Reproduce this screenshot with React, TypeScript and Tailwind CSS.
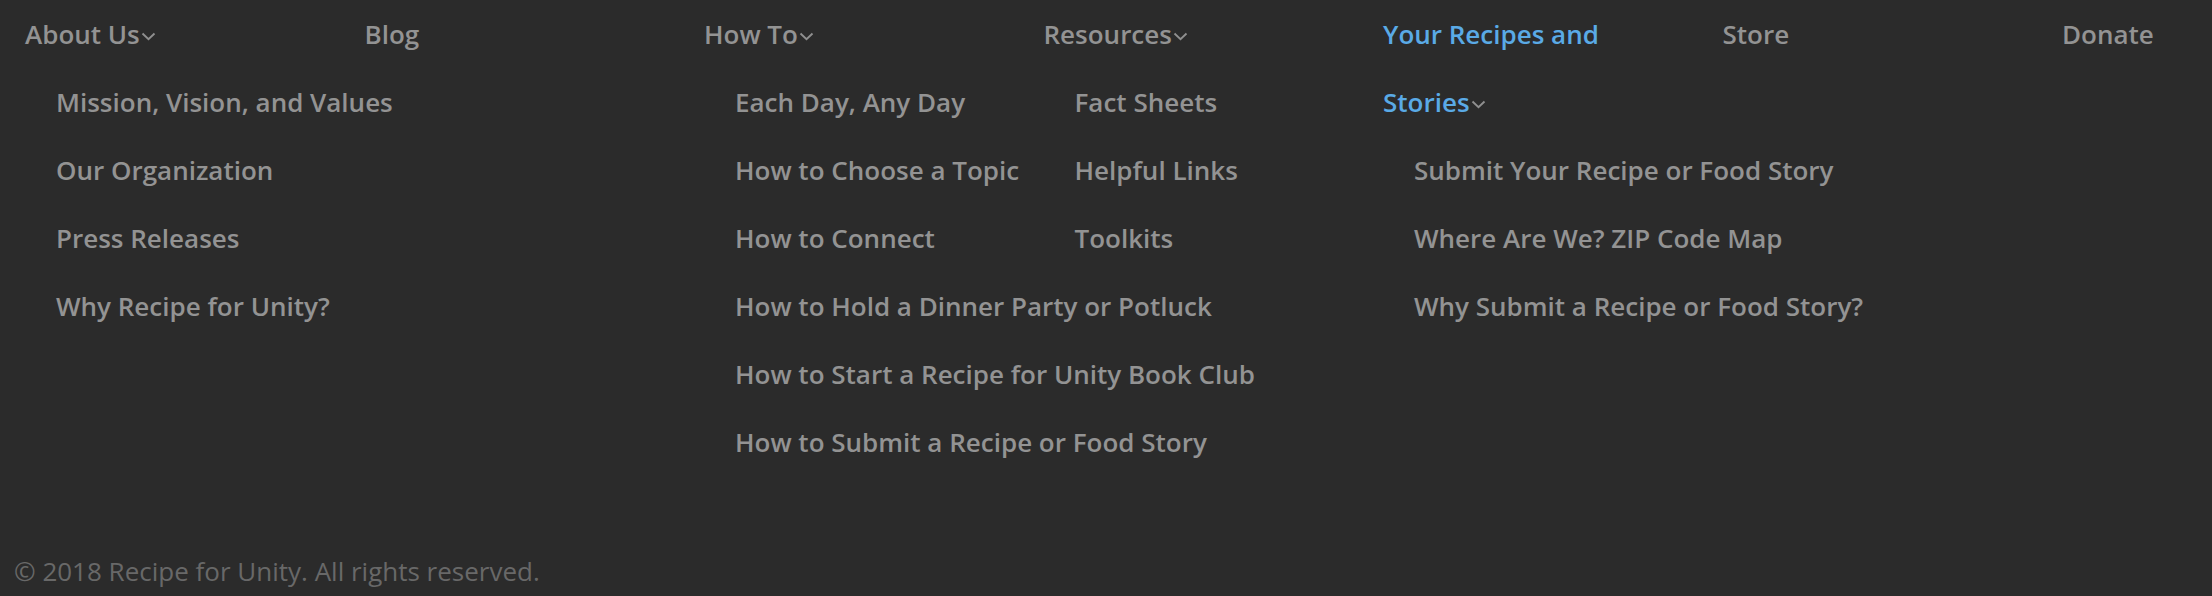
import React from "react";

type Menu = {
  label: string;
  items?: string[];
  active?: boolean;
  narrow?: boolean;
};

const MENUS: Menu[] = [
  {
    label: "About Us",
    items: ["Mission, Vision, and Values", "Our Organization", "Press Releases", "Why Recipe for Unity?"],
  },
  { label: "Blog" },
  {
    label: "How To",
    items: [
      "Each Day, Any Day",
      "How to Choose a Topic",
      "How to Connect",
      "How to Hold a Dinner Party or Potluck",
      "How to Start a Recipe for Unity Book Club",
      "How to Submit a Recipe or Food Story",
    ],
  },
  { label: "Resources", items: ["Fact Sheets", "Helpful Links", "Toolkits"] },
  {
    label: "Your Recipes and Stories",
    active: true,
    narrow: true,
    items: ["Submit Your Recipe or Food Story", "Where Are We? ZIP Code Map", "Why Submit a Recipe or Food Story?"],
  },
  { label: "Store" },
  { label: "Donate" },
];

const Chevron = () => (
  <svg width="15" height="9" viewBox="0 0 15 9" className="inline-block ml-[1px] mb-[2px]">
    <polyline points="1.5,1.5 7.5,7.2 13.5,1.5" fill="none" stroke="#8f8f8f" strokeWidth="1.9" />
  </svg>
);

const Column = ({ menu }: { menu: Menu }) => (
  <div className="w-[339.5px] shrink-0">
    <a
      className={
        (menu.active ? "text-[#5aaae6] " : "text-[#939393] ") +
        (menu.narrow ? "block w-[250px]" : "block whitespace-nowrap")
      }
    >
      {menu.label}
      {menu.items && <Chevron />}
    </a>
    {menu.items && (
      <ul className="pl-[31px]">
        {menu.items.map((item) => (
          <li key={item} className="whitespace-nowrap text-[#939393]">
            {item}
          </li>
        ))}
      </ul>
    )}
  </div>
);

export default function App() {
  return (
    <div
      className="w-[2212px] h-[596px] bg-[#2b2b2b] flex flex-col overflow-hidden"
      style={{ fontFamily: '"Open Sans", sans-serif' }}
    >
      <nav className="flex pl-[25px] text-[26px] font-semibold leading-[68px]">
        {MENUS.map((menu) => (
          <Column key={menu.label} menu={menu} />
        ))}
      </nav>
      <footer className="mt-auto pl-[14px] pb-[7px] text-[26px] leading-[36px] text-[#686868]">
        © 2018 Recipe for Unity. All rights reserved.
      </footer>
    </div>
  );
}
